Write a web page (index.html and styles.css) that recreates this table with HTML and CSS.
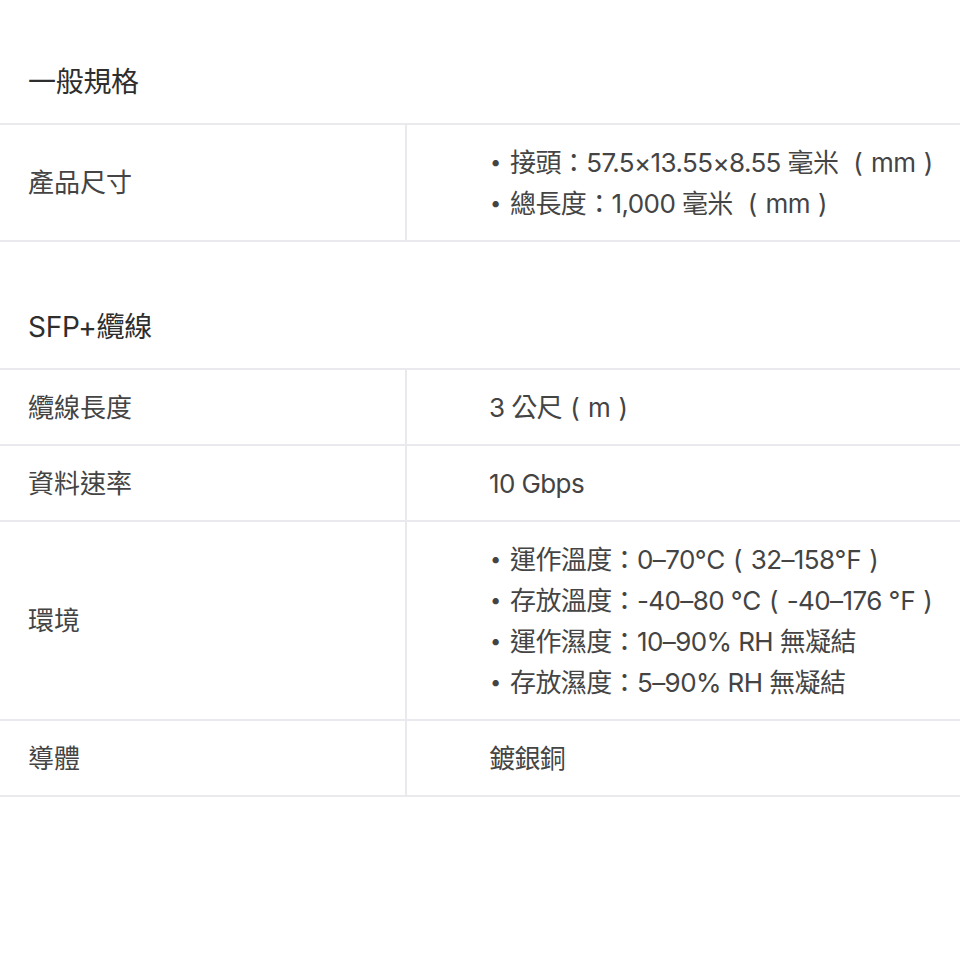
FILE: index.html
```html
<!DOCTYPE html>
<html lang="zh-Hant">
<head>
<meta charset="utf-8">
<title>規格</title>
<link rel="stylesheet" href="styles.css">
</head>
<body>
<main class="specs">
  <section class="group group-first">
    <h2 class="group-title">一般規格</h2>
    <div class="table">
      <div class="row">
        <div class="label">產品尺寸</div>
        <div class="value">
          <ul class="list">
            <li>接頭：57.5×13.55×8.55 毫米 <span class="fp">(</span>mm<span class="fp">)</span></li>
            <li>總長度：1,000 毫米 <span class="fp">(</span>mm<span class="fp">)</span></li>
          </ul>
        </div>
      </div>
    </div>
  </section>
  <section class="group">
    <h2 class="group-title">SFP+纜線</h2>
    <div class="table">
      <div class="row">
        <div class="label">纜線長度</div>
        <div class="value">3 公尺<span class="fp">(</span>m<span class="fp">)</span></div>
      </div>
      <div class="row">
        <div class="label">資料速率</div>
        <div class="value">10 Gbps</div>
      </div>
      <div class="row">
        <div class="label">環境</div>
        <div class="value">
          <ul class="list">
            <li>運作溫度：0–70℃<span class="fp">(</span>32–158℉<span class="fp">)</span></li>
            <li>存放溫度：-40–80 ℃<span class="fp">(</span>-40–176 ℉<span class="fp">)</span></li>
            <li>運作濕度：10–90% RH 無凝結</li>
            <li>存放濕度：5–90% RH 無凝結</li>
          </ul>
        </div>
      </div>
      <div class="row">
        <div class="label">導體</div>
        <div class="value">鍍銀銅</div>
      </div>
    </div>
  </section>
</main>
</body>
</html>
```

FILE: styles.css
```css
* { box-sizing: border-box; }
html, body { margin: 0; padding: 0; background: #fff; }
body {
  font-family: Inter, "Noto Sans CJK TC", sans-serif;
  color: #444;
  font-size: 26px;
  width: 960px;
  overflow: hidden;
}
.specs { padding-top: 62px; }
.group { margin-top: 65px; }
.group-first { margin-top: 0; }
.group-title {
  margin: 0 0 21px 0;
  padding-left: 28px;
  font-size: 28px;
  font-weight: 400;
  line-height: 40px;
  color: #2e2e2e;
  letter-spacing: -0.3px;
}
.table { border-top: 2px solid #e9e9ee; }
.row {
  display: grid;
  grid-template-columns: 407px 1fr;
  border-bottom: 2px solid #e9e9ee;
}
.label {
  padding: 16.5px 0 16.5px 28px;
  line-height: 41px;
  border-right: 2px solid #e9e9ee;
  display: flex;
  align-items: center;
}
.value {
  padding: 16.5px 0 16.5px 82px;
  line-height: 41px;
  white-space: nowrap;
  letter-spacing: -0.6px;
}
.fp {
  display: inline-block;
  width: 26px;
  text-align: center;
  letter-spacing: 0;
}
.list { list-style: none; margin: 0; padding: 0; }
.list li { position: relative; padding-left: 21px; }
.list li::before {
  content: "•";
  position: absolute;
  left: 1px;
  top: 0;
  font-size: 20px;
}
```
